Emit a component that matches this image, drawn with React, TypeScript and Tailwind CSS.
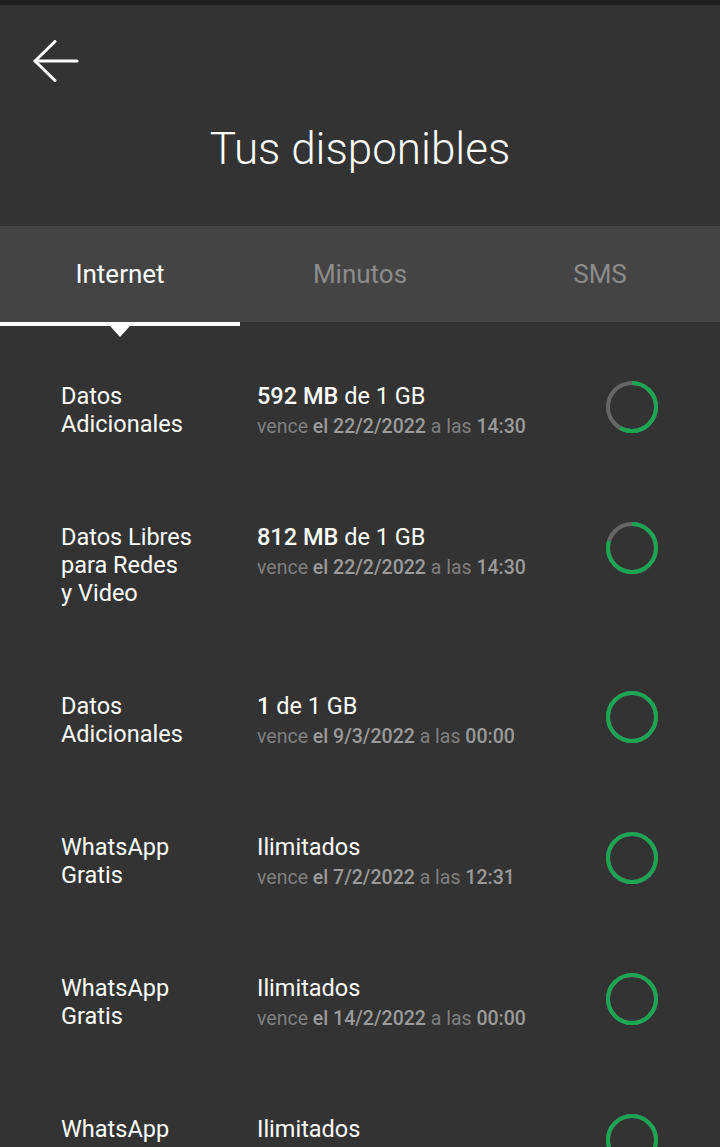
import React from "react";

type Row = {
  name: string;
  amountBold?: string;
  amountRest: string;
  date: string;
  time: string;
  pct: number;
};

const rows: Row[] = [
  { name: "Datos Adicionales", amountBold: "592 MB", amountRest: " de 1 GB", date: "el 22/2/2022", time: "14:30", pct: 592 / 1024 },
  { name: "Datos Libres para Redes y\u00a0Video", amountBold: "812 MB", amountRest: " de 1 GB", date: "el 22/2/2022", time: "14:30", pct: 812 / 1024 },
  { name: "Datos Adicionales", amountBold: "1", amountRest: " de 1 GB", date: "el 9/3/2022", time: "00:00", pct: 1 },
  { name: "WhatsApp Gratis", amountRest: "Ilimitados", date: "el 7/2/2022", time: "12:31", pct: 1 },
  { name: "WhatsApp Gratis", amountRest: "Ilimitados", date: "el 14/2/2022", time: "00:00", pct: 1 },
  { name: "WhatsApp Gratis", amountRest: "Ilimitados", date: "el 21/2/2022", time: "00:00", pct: 1 },
];

function Ring({ pct }: { pct: number }) {
  const r = 24;
  const c = 2 * Math.PI * r;
  return (
    <svg width="54" height="54" viewBox="0 0 54 54" className="shrink-0">
      <circle cx="27" cy="27" r={r} fill="none" stroke="#666666" strokeWidth="4" />
      <circle
        cx="27"
        cy="27"
        r={r}
        fill="none"
        stroke="#1ba653"
        strokeWidth="4"
        strokeDasharray={`${c * pct} ${c}`}
        transform="rotate(-90 27 27)"
      />
    </svg>
  );
}

export default function App() {
  return (
    <div
      className="w-[720px] h-[1147px] overflow-hidden bg-[#333333] text-white"
      style={{ fontFamily: "Roboto, 'Noto Sans', sans-serif" }}
    >
      <div className="h-[5px] bg-[#1e1e1e]" />
      <div className="h-[221px] bg-[#333333] pt-[35px]">
        <div className="pl-[33px]">
          <svg width="46" height="44" viewBox="0 0 46 44" fill="none" stroke="white" strokeWidth="3" strokeLinecap="round" strokeLinejoin="round">
            <path d="M44 21H2" />
            <path d="M22 1.5L2 21L22 40.5" />
          </svg>
        </div>
        <div className="mt-[39px] text-center text-[44px] leading-[52px] font-light">
          Tus disponibles
        </div>
      </div>
      <div className="relative">
        <div className="flex h-[96px] bg-[#444444] text-[26px] pt-[1px]">
          <div className="flex-1 flex items-center justify-center text-white">Internet</div>
          <div className="flex-1 flex items-center justify-center text-[#8c8c8c]">Minutos</div>
          <div className="flex-1 flex items-center justify-center text-[#8c8c8c]">SMS</div>
        </div>
        <div className="flex h-[4px]">
          <div className="w-[240px] bg-white" />
        </div>
        <svg width="20" height="12" viewBox="0 0 20 12" className="absolute left-[110px] top-[100px]">
          <path d="M0 0H20L10 11Z" fill="white" />
        </svg>
      </div>
      <div className="pt-[13px]">
        {rows.map((r, i) => (
          <div key={i} className="flex items-start pl-[61px] pt-[43px] pb-[42px]">
            <div className="w-[160px] text-[23.5px] leading-[28px] text-white">{r.name}</div>
            <div className="ml-[36px] flex-1">
              <div className="text-[23.5px] leading-[28px] text-white">
                {r.amountBold && <span className="font-medium">{r.amountBold}</span>}
                {r.amountRest}
              </div>
              <div className="mt-[6px] text-[19.5px] leading-[22px] text-[#7f7f7f]">
                vence <span className="font-medium text-[#9a9a9a]">{r.date}</span> a las{" "}
                <span className="font-medium text-[#9a9a9a]">{r.time}</span>
              </div>
            </div>
            <div className="mr-[61px] -mt-[2px]">
              <Ring pct={r.pct} />
            </div>
          </div>
        ))}
      </div>
    </div>
  );
}
